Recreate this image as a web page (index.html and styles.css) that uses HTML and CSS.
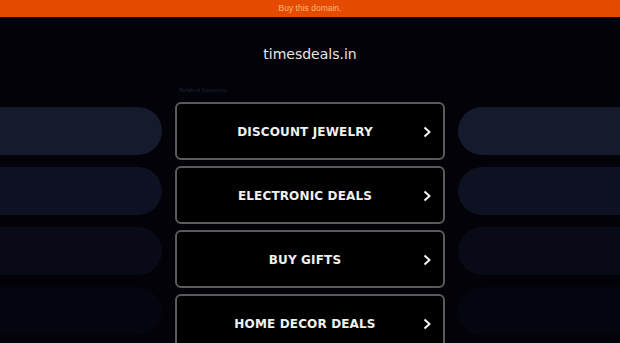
FILE: index.html
```html
<!DOCTYPE html>
<html>
    <head>
        <title>timesdeals.in</title>
        <meta charset="utf-8">
        <link rel="stylesheet" href="styles.css">
    </head>
    <body>
        <div class="topbar">Buy this domain.</div>
        <div class="domain">timesdeals.in</div>
        <div class="layout">
            <div class="side">
                <div class="pill p1"></div>
                <div class="pill p2"></div>
                <div class="pill p3"></div>
                <div class="pill p4"></div>
            </div>
            <div class="main">
                <div class="label">Related Searches</div>
                <a class="link" href="#"><span class="link_text">DISCOUNT JEWELRY</span><svg class="chev" width="8" height="12" viewBox="0 0 8 12"><polyline points="1.5,1.5 6.5,6 1.5,10.5" fill="none" stroke="#f2f2f2" stroke-width="2"/></svg></a>
                <a class="link" href="#"><span class="link_text">ELECTRONIC DEALS</span><svg class="chev" width="8" height="12" viewBox="0 0 8 12"><polyline points="1.5,1.5 6.5,6 1.5,10.5" fill="none" stroke="#f2f2f2" stroke-width="2"/></svg></a>
                <a class="link" href="#"><span class="link_text">BUY GIFTS</span><svg class="chev" width="8" height="12" viewBox="0 0 8 12"><polyline points="1.5,1.5 6.5,6 1.5,10.5" fill="none" stroke="#f2f2f2" stroke-width="2"/></svg></a>
                <a class="link" href="#"><span class="link_text">HOME DECOR DEALS</span><svg class="chev" width="8" height="12" viewBox="0 0 8 12"><polyline points="1.5,1.5 6.5,6 1.5,10.5" fill="none" stroke="#f2f2f2" stroke-width="2"/></svg></a>
            </div>
            <div class="side">
                <div class="pill p1"></div>
                <div class="pill p2"></div>
                <div class="pill p3"></div>
                <div class="pill p4"></div>
            </div>
        </div>
    </body>
</html>
```

FILE: styles.css
```css
body{
    margin: 0;
    background-color: #020208;
    font-family: "DejaVu Sans", Verdana, sans-serif;
    overflow: hidden;
}

.topbar{
    height: 17px;
    line-height: 17px;
    background-color: #e54b00;
    color: #fbb57c;
    font-family: "Liberation Sans", Arial, sans-serif;
    font-size: 8.5px;
    text-align: center;
}

.domain{
    padding-top: 27px;
    line-height: 20px;
    font-size: 14px;
    color: #e6e6e6;
    text-align: center;
}

.layout{
    display: flex;
    justify-content: center;
    gap: 13px;
    overflow: hidden;
}

.side{
    flex-shrink: 0;
    width: 270px;
    padding-top: 43px;
    display: flex;
    flex-direction: column;
    gap: 12px;
}
.pill{
    height: 48px;
    border-radius: 24px;
}
.p1{background-color: #151a2d;}
.p2{background-color: #0e1121;}
.p3{background-color: #080a17;}
.p4{background-color: #04060f;}

.main{
    flex-shrink: 0;
    width: 270px;
    padding-top: 20px;
}
.label{
    padding-left: 4px;
    line-height: 12px;
    font-size: 5.5px;
    color: #1d2234;
    margin-bottom: 6px;
}

.link{
    box-sizing: border-box;
    height: 58px;
    margin-bottom: 6px;
    padding: 2px 12px 0 14px;
    display: flex;
    align-items: center;
    border: 2px solid #5b5b5e;
    border-radius: 6px;
    background-color: #000;
    text-decoration: none;
}
.link_text{
    flex: 1;
    margin-right: 4px;
    text-align: center;
    color: #f0f0f0;
    font-size: 12px;
    font-weight: bold;
    letter-spacing: 0.15px;
}
.chev{
    display: block;
}
```
